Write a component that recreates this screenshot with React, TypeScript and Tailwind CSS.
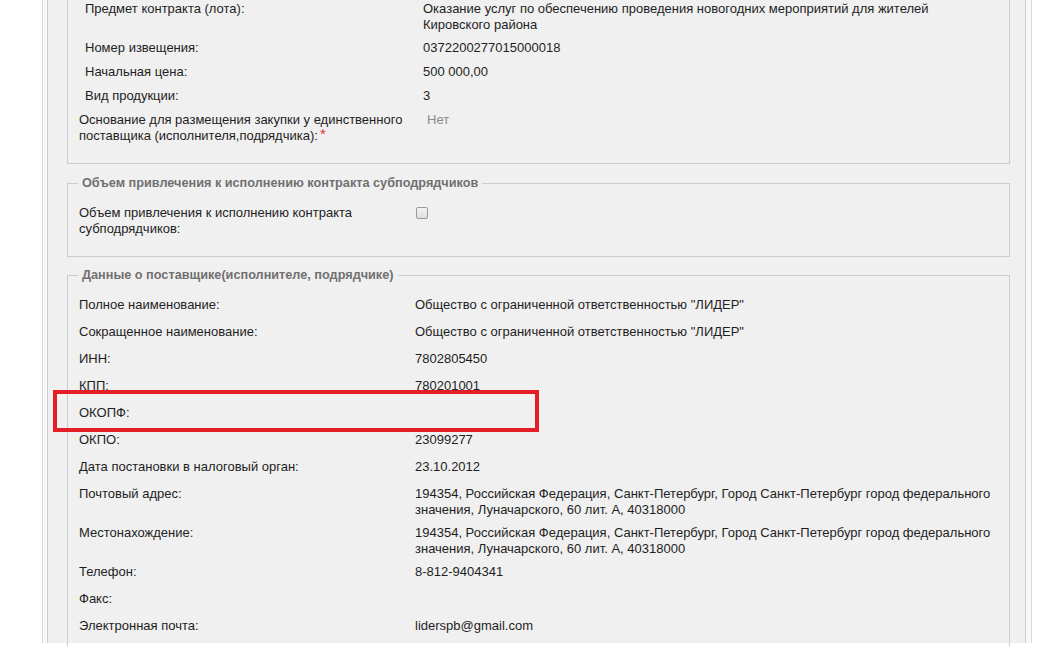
import React from 'react';

type Row = {
  label: React.ReactNode;
  value?: React.ReactNode;
  labelPad?: string;
  valuePad?: string;
  valueClass?: string;
};

const contractRows: Row[] = [
  {
    label: 'Предмет контракта (лота):',
    value: (
      <>
        Оказание услуг по обеспечению проведения новогодних мероприятий для жителей
        <br />
        Кировского района
      </>
    ),
    labelPad: 'pl-[6px]',
    valuePad: 'pl-[8px]',
  },
  { label: 'Номер извещения:', value: '0372200277015000018', labelPad: 'pl-[6px]', valuePad: 'pl-[8px]' },
  { label: 'Начальная цена:', value: '500 000,00', labelPad: 'pl-[6px]', valuePad: 'pl-[8px]' },
  { label: 'Вид продукции:', value: '3', labelPad: 'pl-[6px]', valuePad: 'pl-[8px]' },
  {
    label: (
      <>
        Основание для размещения закупки у единственного
        <br />
        поставщика (исполнителя,подрядчика):
        <span className="relative -top-[1px] ml-[2px] text-[15px] leading-[0] text-[#e0303a]">*</span>
      </>
    ),
    value: 'Нет',
    valuePad: 'pl-[12px]',
    valueClass: 'text-[#8a8a8a]',
  },
];

const address =
  '194354, Российская Федерация, Санкт-Петербург, Город Санкт-Петербург город федерального значения, Луначарского, 60 лит. А, 40318000';

const supplierRows: Row[] = [
  { label: 'Полное наименование:', value: 'Общество с ограниченной ответственностью "ЛИДЕР"' },
  { label: 'Сокращенное наименование:', value: 'Общество с ограниченной ответственностью "ЛИДЕР"' },
  { label: 'ИНН:', value: '7802805450' },
  { label: 'КПП:', value: '780201001' },
  { label: 'ОКОПФ:', value: '' },
  { label: 'ОКПО:', value: '23099277' },
  { label: 'Дата постановки в налоговый орган:', value: '23.10.2012' },
  { label: 'Почтовый адрес:', value: address },
  { label: 'Местонахождение:', value: address },
  { label: 'Телефон:', value: '8-812-9404341' },
  { label: 'Факс:', value: '' },
  { label: 'Электронная почта:', value: 'liderspb@gmail.com' },
];

function Rows({ rows, rowMin }: { rows: Row[]; rowMin: string }) {
  return (
    <div className="grid grid-cols-[336px_1fr] pl-[11px]">
      {rows.map((r, i) => (
        <React.Fragment key={i}>
          <div className={`${rowMin} pt-[4px] pb-[3px] leading-[16px] text-[#1e1e1e] ${r.labelPad || ''}`}>
            {r.label}
          </div>
          <div
            className={`${rowMin} pt-[4px] pb-[3px] leading-[16px] ${r.valuePad || ''} ${r.valueClass || 'text-[#1e1e1e]'}`}
          >
            {r.value}
          </div>
        </React.Fragment>
      ))}
    </div>
  );
}

function Section({ title, children, className }: { title: string; children: React.ReactNode; className?: string }) {
  return (
    <fieldset className={`ml-[19px] mr-[15px] border border-[#cccccc] pt-[10px] pb-[16px] ${className || ''}`}>
      <legend className="ml-[10px] px-[4px] text-[12.7px] leading-[16px] font-bold text-[#707070]">{title}</legend>
      {children}
    </fieldset>
  );
}

export default function App() {
  return (
    <div
      className="relative w-[1048px] h-[646px] overflow-hidden bg-white text-[13px]"
      style={{ fontFamily: '"Liberation Sans", Arial, sans-serif' }}
    >
      <div className="ml-[42px] w-[990px] h-full border-x border-[#d8d8d8] bg-[#f8f8f8] pl-[4px] pr-[5px]">
        <div className="h-full border-x border-[#cdcdcd] bg-[#f0f0f0]">
          {/* contract block, its top is scrolled out of view */}
          <div className="ml-[19px] mr-[15px] -mt-[3px] border-x border-b border-[#cccccc] pb-[16px]">
            <Rows rows={contractRows} rowMin="min-h-[24px]" />
          </div>

          <Section title="Объем привлечения к исполнению контракта субподрядчиков" className="mt-[11px]">
            <div className="grid grid-cols-[336px_1fr] pl-[11px]">
              <div className="pt-[4px] pb-[3px] leading-[16px] text-[#1e1e1e]">
                Объем привлечения к исполнению контракта
                <br />
                субподрядчиков:
              </div>
              <div className="pt-[6px] pl-[1px]">
                <span className="block w-[12px] h-[12px] rounded-[2px] border border-[#9a9a9a] bg-gradient-to-b from-[#f4f4f4] to-[#dedede]" />
              </div>
            </div>
          </Section>

          <Section title="Данные о поставщике(исполнителе, подрядчике)" className="mt-[10px]">
            <Rows rows={supplierRows} rowMin="min-h-[27px]" />
          </Section>
        </div>
      </div>

      {/* annotation frame */}
      <div className="absolute left-[53px] top-[390px] w-[486px] h-[42px] border-[4px] border-[#e41e26]" />
    </div>
  );
}
